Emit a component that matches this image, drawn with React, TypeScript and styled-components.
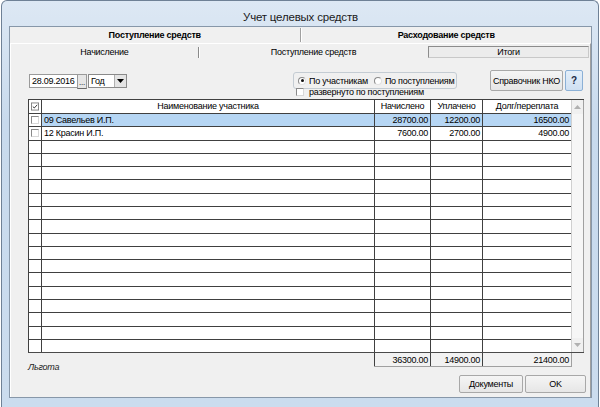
import styled, { createGlobalStyle } from "styled-components";

const ui = `"Liberation Sans", Arial, sans-serif`;
const cols = "12px 333px 56px 52px 89px";

type Row = { name: string; nach: string; upl: string; dolg: string; selected?: boolean };

const rows: Row[] = [
  { name: "09 Савельев И.П.", nach: "28700.00", upl: "12200.00", dolg: "16500.00", selected: true },
  { name: "12 Красин И.П.", nach: "7600.00", upl: "2700.00", dolg: "4900.00" },
];

const TOTAL_ROWS = 18;

const GlobalStyle = createGlobalStyle`
  html, body { margin: 0; padding: 0; background: #ffffff; }
  body { font-family: ${ui}; font-size: 9px; letter-spacing: -0.25px; color: #000; }
  * { box-sizing: border-box; }
`;

const Window = styled.div`
  margin-left: 1px;
  width: 598px;
  height: 407px;
  border: 1px solid #6f8196;
  border-bottom: none;
  border-radius: 6px 6px 0 0;
  background: linear-gradient(#dde8f4, #c8daed 120px, #cbdcee);
  padding: 0 6px 9px 7px;
  display: flex;
  flex-direction: column;
`;

const TitleBar = styled.div`
  height: 25px;
  display: flex;
  align-items: flex-end;
  justify-content: center;
  padding-bottom: 3px;
  font-size: 11.5px;
  letter-spacing: -0.2px;
  color: #1a1a1a;
`;

const Client = styled.div`
  flex: 1;
  border: 1px solid #8797a9;
  background: #f0f0f0;
  display: flex;
  flex-direction: column;
`;

const TopTabs = styled.div`
  height: 16px;
  display: flex;
  align-items: stretch;
`;

const TopTab = styled.div`
  flex: 1;
  display: flex;
  align-items: center;
  justify-content: center;
  font-weight: bold;
`;

const TabDivider = styled.div`
  width: 2px;
  margin: 1px 0;
  border-left: 1px solid #a0a0a0;
  border-right: 1px solid #ffffff;
`;

const SubTabs = styled.div`
  height: 17px;
  display: flex;
  align-items: stretch;
  border-top: 1px solid #ffffff;
  border-left: 1px solid #ffffff;
  border-right: 1px solid #a0a0a0;
`;

const SubTab = styled.div<{ $w: number }>`
  width: ${({ $w }) => $w}px;
  display: flex;
  align-items: center;
  justify-content: center;
`;

const SubDivider = styled.div`
  width: 2px;
  margin: 3px 0 2px;
  border-left: 1px solid #8a8a8a;
  border-right: 1px solid #ffffff;
`;

const SubTabActive = styled.div`
  flex: 1;
  margin: 2px 1px 2px 1px;
  border: 1px solid #8c8c8c;
  border-right-color: #c8c8c8;
  border-bottom-color: #c8c8c8;
  background: #ececec;
  display: flex;
  align-items: center;
  justify-content: center;
`;

const Panel = styled.div`
  flex: 1;
  border-left: 1px solid #ffffff;
  border-right: 1px solid #a0a0a0;
  padding: 10px 6px 0 17px;
  display: flex;
  flex-direction: column;
`;

const Controls = styled.div`
  height: 29px;
  display: flex;
  align-items: flex-start;
`;

const DateGroup = styled.div`
  display: flex;
  margin: 4px 0 0 1px;
`;

const DateInput = styled.div`
  width: 48px;
  height: 14px;
  background: #fff;
  border: 1px solid #9a9a9a;
  border-right: none;
  padding-left: 2px;
  line-height: 12px;
  white-space: nowrap;
`;

const DotsButton = styled.div`
  width: 10px;
  height: 15px;
  background: #e6e6e6;
  border: 1px solid #9a9a9a;
  border-bottom-color: #6a6a6a;
  display: flex;
  align-items: flex-end;
  justify-content: center;
  line-height: 10px;
  font-size: 8px;
`;

const Select = styled.div`
  width: 39px;
  height: 14px;
  margin-left: 1px;
  background: #fff;
  border: 1px solid #8a8a8a;
  display: flex;
  align-items: stretch;
`;

const SelectText = styled.div`
  flex: 1;
  padding-left: 2px;
  line-height: 12px;
`;

const SelectArrow = styled.div`
  width: 12px;
  background: #e4e4e4;
  border-left: 1px solid #b0b0b0;
  display: flex;
  align-items: center;
  justify-content: center;
`;

const RadioArea = styled.div`
  width: 164px;
  margin: 2px 0 0 166px;
  display: flex;
  flex-direction: column;
`;

const GroupBox = styled.div`
  height: 17px;
  border: 1px solid #c4ccd3;
  border-radius: 3px;
  display: flex;
  align-items: center;
  padding-left: 4px;
  white-space: nowrap;
`;

const RadioItem = styled.div<{ $gap?: number }>`
  display: flex;
  align-items: center;
  gap: 3px;
  margin-left: ${({ $gap }) => $gap ?? 0}px;
`;

const RadioDot = styled.span<{ $on?: boolean }>`
  width: 8px;
  height: 8px;
  flex: none;
  border-radius: 50%;
  border: 1px solid #8a8a8a;
  border-right-color: #e0e0e0;
  border-bottom-color: #e0e0e0;
  background: #fff;
  display: flex;
  align-items: center;
  justify-content: center;
  &::after {
    content: "";
    width: 3px;
    height: 3px;
    border-radius: 50%;
    background: ${({ $on }) => ($on ? "#111" : "transparent")};
  }
`;

const CheckRow = styled.div`
  display: flex;
  align-items: center;
  gap: 5px;
  margin-top: -2px;
  padding-left: 3px;
  line-height: 10px;
  white-space: nowrap;
`;

const Check = styled.span`
  width: 8px;
  height: 8px;
  flex: none;
  background: #fff;
  border: 1px solid #8a8a8a;
  border-right-color: #d8d8d8;
  border-bottom-color: #d8d8d8;
`;

const ButtonBar = styled.div`
  margin-left: auto;
  margin-right: 1px;
  display: flex;
  gap: 2px;
`;

const Button = styled.div<{ $w: number; $h?: number; $accent?: boolean }>`
  width: ${({ $w }) => $w}px;
  height: ${({ $h }) => $h ?? 21}px;
  border: 1px solid ${({ $accent }) => ($accent ? "#8bb0d6" : "#a8a8a8")};
  border-radius: 2px;
  background: ${({ $accent }) =>
    $accent ? "linear-gradient(#e3eef9, #cfe0f2)" : "linear-gradient(#f5f5f5, #e6e6e6)"};
  display: flex;
  align-items: center;
  justify-content: center;
  white-space: nowrap;
  font-weight: ${({ $accent }) => ($accent ? "bold" : "normal")};
  font-size: ${({ $accent }) => ($accent ? "10px" : "9px")};
  color: ${({ $accent }) => ($accent ? "#1b2a44" : "#000")};
`;

const Grid = styled.div`
  width: 556px;
  height: 254px;
  border-top: 1px solid #404040;
  border-left: 1px solid #404040;
  border-bottom: 1px solid #4a4a4a;
  display: flex;
`;

const Table = styled.div`
  display: flex;
  flex-direction: column;
`;

const GridRow = styled.div<{ $head?: boolean }>`
  display: grid;
  grid-template-columns: ${cols};
  height: ${({ $head }) => ($head ? "14px" : "auto")};
  flex: ${({ $head }) => ($head ? "none" : 1)};
  border-bottom: 1px solid #404040;
  &:last-child { border-bottom: none; }
`;

const Cell = styled.div<{ $align?: string; $sel?: boolean; $first?: boolean }>`
  border-left: ${({ $first }) => ($first ? "none" : "1px solid #404040")};
  background: ${({ $sel }) => ($sel ? "#b6d6f4" : "#fff")};
  display: flex;
  align-items: center;
  justify-content: ${({ $align }) => $align ?? "flex-start"};
  padding: 0 2px;
  white-space: nowrap;
  overflow: hidden;
  line-height: 11px;
`;

const Body = styled.div`
  flex: 1;
  display: flex;
  flex-direction: column;
`;

const Scrollbar = styled.div`
  width: 13px;
  border-left: 1px solid #d0d0d0;
  border-right: 1px solid #a0a0a0;
  background: #f6f6f6;
  display: flex;
  flex-direction: column;
  justify-content: space-between;
`;

const ScrollButton = styled.div`
  height: 14px;
  display: flex;
  align-items: center;
  justify-content: center;
  background: #f0f0f0;
`;

const Bottom = styled.div`
  display: grid;
  grid-template-columns: 346px 1fr;
`;

const Lgota = styled.div`
  grid-row: span 2;
  padding-top: 9px;
  font-style: italic;
  color: #222;
`;

const Totals = styled.div`
  display: grid;
  grid-template-columns: 56px 52px 89px;
  width: 198px;
  height: 14px;
  border-right: 1px solid #a0a0a0;
  border-bottom: 1px solid #a0a0a0;
`;

const TotalCell = styled.div`
  border-left: 1px solid #404040;
  display: flex;
  align-items: center;
  justify-content: flex-end;
  padding-right: 2px;
  background: #f2f2f2;
`;

const Actions = styled.div`
  display: flex;
  justify-content: flex-end;
  gap: 2px;
  margin: 8px -2px 0 0;
`;

const Tri = ({ dir, color }: { dir: "up" | "down"; color: string }) => (
  <svg width="7" height="4" viewBox="0 0 7 4">
    <path d={dir === "up" ? "M0 4 L3.5 0 L7 4 Z" : "M0 0 L3.5 4 L7 0 Z"} fill={color} />
  </svg>
);

const HeadCheck = () => (
  <svg width="9" height="9" viewBox="0 0 9 9">
    <rect x="0.5" y="0.5" width="8" height="8" fill="#fff" stroke="#7a7a7a" />
    <path d="M2 4.5 L3.7 6.2 L7 2.6" fill="none" stroke="#333" strokeWidth="1.1" />
  </svg>
);

export default function App() {
  const filler = Array.from({ length: TOTAL_ROWS - rows.length });

  return (
    <>
      <GlobalStyle />
      <Window>
        <TitleBar>Учет целевых средств</TitleBar>
        <Client>
          <TopTabs>
            <TopTab>Поступление средств</TopTab>
            <TabDivider />
            <TopTab>Расходование средств</TopTab>
          </TopTabs>
          <SubTabs>
            <SubTab $w={187}>Начисление</SubTab>
            <SubDivider />
            <SubTab $w={227}>Поступление средств</SubTab>
            <SubTabActive>Итоги</SubTabActive>
          </SubTabs>
          <Panel>
            <Controls>
              <DateGroup>
                <DateInput>28.09.2016</DateInput>
                <DotsButton>...</DotsButton>
                <Select>
                  <SelectText>Год</SelectText>
                  <SelectArrow>
                    <Tri dir="down" color="#000" />
                  </SelectArrow>
                </Select>
              </DateGroup>
              <RadioArea>
                <GroupBox>
                  <RadioItem>
                    <RadioDot $on />
                    По участникам
                  </RadioItem>
                  <RadioItem $gap={6}>
                    <RadioDot />
                    По поступлениям
                  </RadioItem>
                </GroupBox>
                <CheckRow>
                  <Check />
                  развернуто по поступлениям
                </CheckRow>
              </RadioArea>
              <ButtonBar>
                <Button $w={73}>Справочник НКО</Button>
                <Button $w={18} $accent>?</Button>
              </ButtonBar>
            </Controls>

            <Grid>
              <Table>
                <GridRow $head>
                  <Cell $first $align="center"><HeadCheck /></Cell>
                  <Cell $align="center">Наименование участника</Cell>
                  <Cell $align="center">Начислено</Cell>
                  <Cell $align="center">Уплачено</Cell>
                  <Cell $align="center">Долг/переплата</Cell>
                </GridRow>
                <Body>
                  {rows.map((r) => (
                    <GridRow key={r.name}>
                      <Cell $first $align="center"><Check /></Cell>
                      <Cell $sel={r.selected}>{r.name}</Cell>
                      <Cell $sel={r.selected} $align="flex-end">{r.nach}</Cell>
                      <Cell $sel={r.selected} $align="flex-end">{r.upl}</Cell>
                      <Cell $sel={r.selected} $align="flex-end">{r.dolg}</Cell>
                    </GridRow>
                  ))}
                  {filler.map((_, i) => (
                    <GridRow key={i}>
                      <Cell $first />
                      <Cell />
                      <Cell />
                      <Cell />
                      <Cell />
                    </GridRow>
                  ))}
                </Body>
              </Table>
              <Scrollbar>
                <ScrollButton><Tri dir="up" color="#b0b0b0" /></ScrollButton>
                <ScrollButton><Tri dir="down" color="#b0b0b0" /></ScrollButton>
              </Scrollbar>
            </Grid>

            <Bottom>
              <Lgota>Льгота</Lgota>
              <Totals>
                <TotalCell>36300.00</TotalCell>
                <TotalCell>14900.00</TotalCell>
                <TotalCell>21400.00</TotalCell>
              </Totals>
              <Actions>
                <Button $w={64} $h={18}>Документы</Button>
                <Button $w={61} $h={18}>OK</Button>
              </Actions>
            </Bottom>
          </Panel>
        </Client>
      </Window>
    </>
  );
}
